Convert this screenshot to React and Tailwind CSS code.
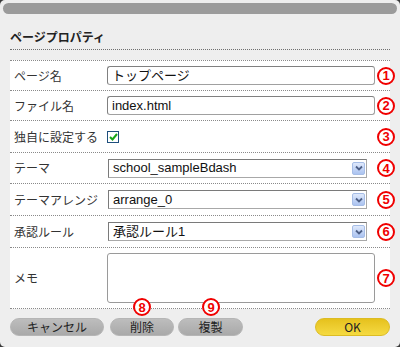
import React from 'react'

const jp = { fontFamily: '"Noto Sans CJK JP", "Liberation Sans", sans-serif' }
const field = { fontFamily: '"Liberation Sans", "Noto Sans CJK JP", sans-serif' }

function Num({ n, className = '' }) {
  return (
    <span
      className={`absolute flex items-center justify-center w-[18px] h-[18px] rounded-full border-2 border-[#f00000] bg-white text-[#f00000] text-[13px] font-bold leading-none ${className}`}
      style={{ fontFamily: '"Liberation Sans", sans-serif' }}
    >
      {n}
    </span>
  )
}

function Row({ label, h, num, children }) {
  return (
    <div className={`relative flex items-center border-b border-dotted border-[#8a8a8a] ${h}`}>
      <div className="w-[97px] pl-[4px] text-[12px] text-[#333] whitespace-nowrap">{label}</div>
      <div className="flex-1 flex items-center">{children}</div>
      <Num n={num} className="right-[-5px] top-1/2 -translate-y-1/2" />
    </div>
  )
}

function TextBox({ value }) {
  return (
    <div
      className="w-[268px] h-[19px] flex items-center px-[4px] rounded-[3px] border border-[#a0a0a0] border-t-[#808080] border-l-[#808080] bg-white text-[13px] text-[#111]"
      style={field}
    >
      {value}
    </div>
  )
}

function Select({ value }) {
  return (
    <div
      className="ml-[1px] w-[259px] h-[19px] flex items-center justify-between pl-[4px] pr-[1px] border border-[#a8a8a8] border-t-[#7a7a7a] border-l-[#7a7a7a] bg-white text-[13px] text-[#111]"
      style={field}
    >
      <span>{value}</span>
      <span className="w-[13px] h-[13px] flex items-center justify-center rounded-[2px] border border-[#a6bde6] bg-gradient-to-b from-[#dfe9fc] to-[#abc3f0]">
        <svg width="8" height="6" viewBox="0 0 8 6">
          <path d="M1 1.5 L4 4.5 L7 1.5" fill="none" stroke="#4d5f86" strokeWidth="1.8" />
        </svg>
      </span>
    </div>
  )
}

function Btn({ children, w, ok }) {
  return (
    <div
      className={`${w} h-[18px] flex items-center justify-center rounded-full text-[12px] text-[#222] ${
        ok
          ? 'bg-gradient-to-b from-[#e6c11c] to-[#f5da40] border border-[#dcbc24]'
          : 'bg-gradient-to-b from-[#bdbdbd] to-[#a9a9a9] border border-[#b5b5b5]'
      }`}
    >
      {children}
    </div>
  )
}

export default function App() {
  return (
    <div className="w-[400px] h-[347px] bg-[#3a3a3a]" style={jp}>
      <div className="relative w-full h-full rounded-[5px] bg-[#eeeeee] overflow-hidden">
        <div className="mx-[3px] pt-[3px]">
          <div className="h-[11px] rounded-full bg-[#9b9b9b]" />
        </div>

        <div className="mx-[10px] pt-[14px] pb-[3px] border-b border-dotted border-[#6f6f6f]">
          <div className="h-[18px] leading-[18px] text-[12px] font-bold text-[#222]">ページプロパティ</div>
        </div>

        <div className="mx-[10px] mt-[10px] bg-white border-t border-dotted border-[#8a8a8a]">
          <Row label="ページ名" h="h-[30px]" num="1">
            <TextBox value="トップページ" />
          </Row>
          <Row label="ファイル名" h="h-[30px]" num="2">
            <TextBox value="index.html" />
          </Row>
          <Row label="独自に設定する" h="h-[32px]" num="3">
            <span className="w-[12px] h-[12px] flex items-center justify-center border border-[#1e4f7d] bg-white">
              <svg width="9" height="8" viewBox="0 0 9 8">
                <path d="M1 4 L3.5 6.5 L8 1" fill="none" stroke="#1aa51a" strokeWidth="2" />
              </svg>
            </span>
          </Row>
          <Row label="テーマ" h="h-[31px]" num="4">
            <Select value="school_sampleBdash" />
          </Row>
          <Row label="テーマアレンジ" h="h-[32px]" num="5">
            <Select value="arrange_0" />
          </Row>
          <Row label="承認ルール" h="h-[32px]" num="6">
            <Select value="承認ルール1" />
          </Row>
          <Row label="メモ" h="h-[61px]" num="7">
            <div className="w-[268px] h-[50px] rounded-[3px] border border-[#9a9a9a] bg-white" />
          </Row>
        </div>

        <div className="mx-[10px] mt-[9px] flex items-center">
          <Btn w="w-[94px]">キャンセル</Btn>
          <div className="ml-[6px]">
            <Btn w="w-[64px]">削除</Btn>
          </div>
          <div className="ml-[4px]">
            <Btn w="w-[65px]">複製</Btn>
          </div>
          <div className="ml-auto">
            <Btn w="w-[75px]" ok>OK</Btn>
          </div>
        </div>

        <Num n="8" className="left-[133px] top-[298px]" />
        <Num n="9" className="left-[202px] top-[298px]" />
      </div>
    </div>
  )
}
